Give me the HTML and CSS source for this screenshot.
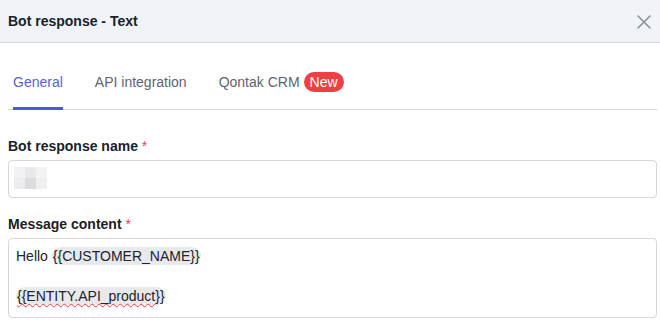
FILE: index.html
```html
<!DOCTYPE html>
<html>
<head>
<meta charset="utf-8">
<link rel="stylesheet" href="styles.css">
</head>
<body>
<div class="modal">
  <header class="modal-header">
    <h1 class="modal-title">Bot response - Text</h1>
    <button class="close-btn" aria-label="Close">
      <svg width="16" height="16" viewBox="0 0 16 16"><path d="M2 2 L14 14 M14 2 L2 14" stroke="#8a8f99" stroke-width="1.6" stroke-linecap="round" fill="none"/></svg>
    </button>
  </header>
  <div class="modal-body">
    <nav class="tabs">
      <div class="tab active">General</div>
      <div class="tab">API integration</div>
      <div class="tab">Qontak CRM <span class="badge">New</span></div>
    </nav>
    <div class="field">
      <label class="label first">Bot response name <span class="req">*</span></label>
      <div class="input">
        <div class="blur">
          <span class="px p1"></span><span class="px p2"></span><span class="px p3"></span>
          <span class="px p4"></span><span class="px p5"></span><span class="px p6"></span>
        </div>
      </div>
    </div>
    <div class="field">
      <label class="label">Message content <span class="req">*</span></label>
      <div class="textarea">
        <div class="line">Hello <span class="chip">{{CUSTOMER_NAME}}</span></div>
        <div class="line"><br></div>
        <div class="line"><span class="chip"><span class="spell">{{ENTITY.API_product</span>}}</span></div>
      </div>
    </div>
  </div>
</div>
</body>
</html>
```

FILE: styles.css
```css
* { box-sizing: border-box; }
html, body { margin: 0; padding: 0; background: #fff; }
body { font-family: "Liberation Sans", Arial, sans-serif; color: #1f2430; width: 660px; height: 327px; overflow: hidden; }

.modal-header {
  height: 43px;
  background: #f0f3f8;
  border-bottom: 1px solid #d3d7de;
  display: flex;
  align-items: center;
  justify-content: space-between;
  padding: 0 6px 0 8px;
}
.modal-title { margin: 0; font-size: 14px; font-weight: bold; color: #1c2029; }
.close-btn { border: 0; background: none; padding: 0; width: 20px; height: 20px; display: flex; align-items: center; justify-content: center; margin-top: 2px; }

.modal-body { padding: 0 3px 0 8px; }

.tabs {
  display: flex;
  height: 67px;
  border-bottom: 1px solid #d3d7de;
  align-items: stretch;
  padding-left: 5px;
}
.tab {
  font-size: 14px;
  color: #5d6472;
  display: flex;
  align-items: center;
  margin-right: 32px;
  border-bottom: 3px solid transparent;
  margin-bottom: -1px;
  padding-top: 14px;
}
.tab.active { color: #5564d4; border-bottom-color: #4a5ad8; }
.badge {
  display: inline-block;
  background: #ee3f45;
  color: #fff;
  font-size: 14px;
  line-height: 20px;
  height: 20px;
  padding: 0 6px;
  border-radius: 10px;
  margin-left: 4px;
}

.label { display: block; font-size: 14px; font-weight: bold; color: #1c2029; margin-top: 18px; margin-bottom: 6px; line-height: 16px; }
.label.first { margin-top: 28px; }
.req { color: #ee3f45; font-weight: normal; }

.input {
  height: 38px;
  border: 1px solid #d3d7de;
  border-radius: 4px;
  padding: 6px 5px;
}
.blur { display: grid; grid-template-columns: 11px 11px 11px; grid-template-rows: 11px 11px; }
.px { display: block; }
.p1 { background: #f2f2f4; }
.p2 { background: #e9e9ec; }
.p3 { background: #f3f3f4; }
.p4 { background: #ececef; }
.p5 { background: #dcdbe0; }
.p6 { background: #eeeff0; }

.textarea {
  border: 1px solid #d3d7de;
  border-radius: 4px;
  padding: 7px 7px 10px 7px;
  font-size: 14px;
  color: #20242c;
  height: 80px;
}
.line { line-height: 20px; height: 20px; }
.chip { background: #e8e9ed; border-radius: 9px; padding: 1px 1px; }
.spell { text-decoration: underline wavy #ee3f45; text-decoration-thickness: 1px; text-underline-offset: 2px; text-decoration-skip-ink: none; }
```
